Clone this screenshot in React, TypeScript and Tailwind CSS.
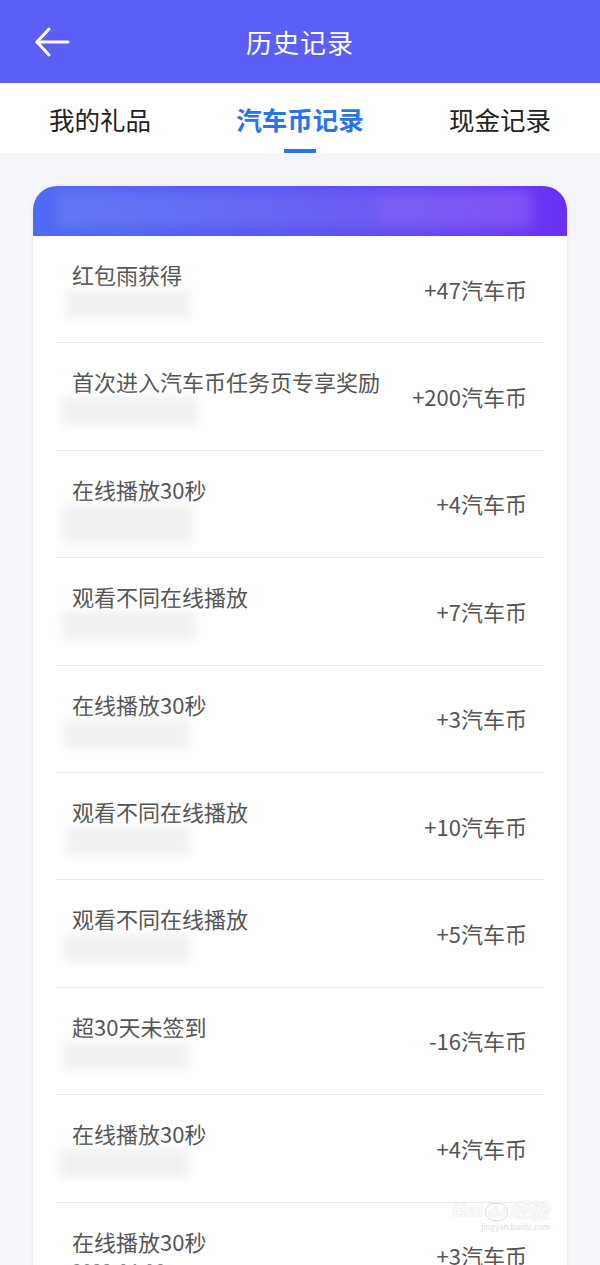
import React from 'react';

type Record = {
  title: string;
  amount: string;
  blurW: number;
  blurX: number;
  blurH?: number;
  date?: string;
};

const RECORDS: Record[] = [
  { title: '红包雨获得', amount: '+47汽车币', blurW: 124, blurX: -6 },
  { title: '首次进入汽车币任务页专享奖励', amount: '+200汽车币', blurW: 136, blurX: -10 },
  { title: '在线播放30秒', amount: '+4汽车币', blurW: 130, blurX: -10, blurH: 38 },
  { title: '观看不同在线播放', amount: '+7汽车币', blurW: 132, blurX: -9 },
  { title: '在线播放30秒', amount: '+3汽车币', blurW: 126, blurX: -8 },
  { title: '观看不同在线播放', amount: '+10汽车币', blurW: 124, blurX: -6 },
  { title: '观看不同在线播放', amount: '+5汽车币', blurW: 126, blurX: -8 },
  { title: '超30天未签到', amount: '-16汽车币', blurW: 124, blurX: -8 },
  { title: '在线播放30秒', amount: '+4汽车币', blurW: 128, blurX: -12 },
  { title: '在线播放30秒', amount: '+3汽车币', blurW: 0, blurX: 0, date: '2022-04-06' },
];

const TABS = ['我的礼品', '汽车币记录', '现金记录'];

export default function App() {
  return (
    <div
      className="relative w-[600px] h-[1265px] overflow-hidden bg-[#f5f6f9]"
      style={{ fontFamily: '"Noto Sans CJK SC", "Noto Sans", sans-serif' }}
    >
      {/* top bar */}
      <div className="relative h-[83px] bg-[#5c5ff6] flex items-center justify-center">
        <button className="absolute left-[34px] top-[26px] w-[36px] h-[32px] text-white">
          <svg viewBox="0 0 36 32" className="w-full h-full" fill="none" stroke="currentColor" strokeWidth={3} strokeLinecap="round" strokeLinejoin="round">
            <path d="M34 16H3" />
            <path d="M15 3 L3 16 L15 29" />
          </svg>
        </button>
        <h1 className="text-white text-[26px] leading-none tracking-[1px]">历史记录</h1>
      </div>

      {/* tabs */}
      <div className="h-[70px] bg-white flex items-start">
        {TABS.map((t, i) => (
          <div key={t} className="flex-1 flex flex-col items-center pt-[19px]">
            <span
              className={
                i === 1
                  ? 'text-[25.5px] leading-[33px] font-bold text-[#2b74e8]'
                  : 'text-[25.5px] leading-[33px] text-[#222]'
              }
            >
              {t}
            </span>
            {i === 1 && <div className="mt-[14px] w-[32px] h-[4px] bg-[#2b74e8]" />}
          </div>
        ))}
      </div>

      {/* card */}
      <div className="mx-[33px] mt-[33px] rounded-t-[24px] bg-white overflow-hidden shadow-[0_0_4px_rgba(230,220,225,0.6)]">
        <div className="relative h-[50px] bg-gradient-to-r from-[#4d6cf5] via-[#5a52f4] to-[#6a30f3] overflow-hidden">
          <div className="absolute left-[24px] right-[34px] top-[6px] h-[36px] bg-white/10 blur-[6px]" />
          <div className="absolute right-[40px] top-[6px] w-[150px] h-[34px] bg-[#a070ff]/25 blur-[8px]" />
        </div>

        <div className="mx-[23px]">
          {RECORDS.map((r, idx) => (
            <div key={idx} className="h-[107.4px] border-b border-[#ebebeb] flex items-center justify-between">
              <div className="self-start pt-[23px] pl-[16px]">
                <div className="text-[22px] leading-[31px] text-[#555]">{r.title}</div>
                {r.date ? (
                  <div className="text-[18px] leading-[24px] text-[#888]">{r.date}</div>
                ) : (
                  <div
                    className="rounded-[4px] bg-[#f0f0f0] blur-[4px]"
                    style={{ width: r.blurW, height: r.blurH ?? 28, marginLeft: r.blurX }}
                  />
                )}
              </div>
              <div className="pr-[17px] text-[22px] leading-[31px] text-[#555]">{r.amount}</div>
            </div>
          ))}
        </div>
      </div>

      {/* watermark */}
      <div className="absolute left-[452px] top-[1200px] flex flex-col items-end pointer-events-none">
        <span className="text-[20px] leading-none text-white/90 [text-shadow:0_0_1px_#ccc] font-bold italic" style={{ fontFamily: '"Liberation Sans", sans-serif' }}>
          Bai<span className="mx-[2px] text-[14px] rounded-full border border-[#ddd] px-[2px]">du</span>经验
        </span>
        <span className="text-[8px] leading-none mt-[3px] text-[#ddd]">jingyan.baidu.com</span>
      </div>
    </div>
  );
}
